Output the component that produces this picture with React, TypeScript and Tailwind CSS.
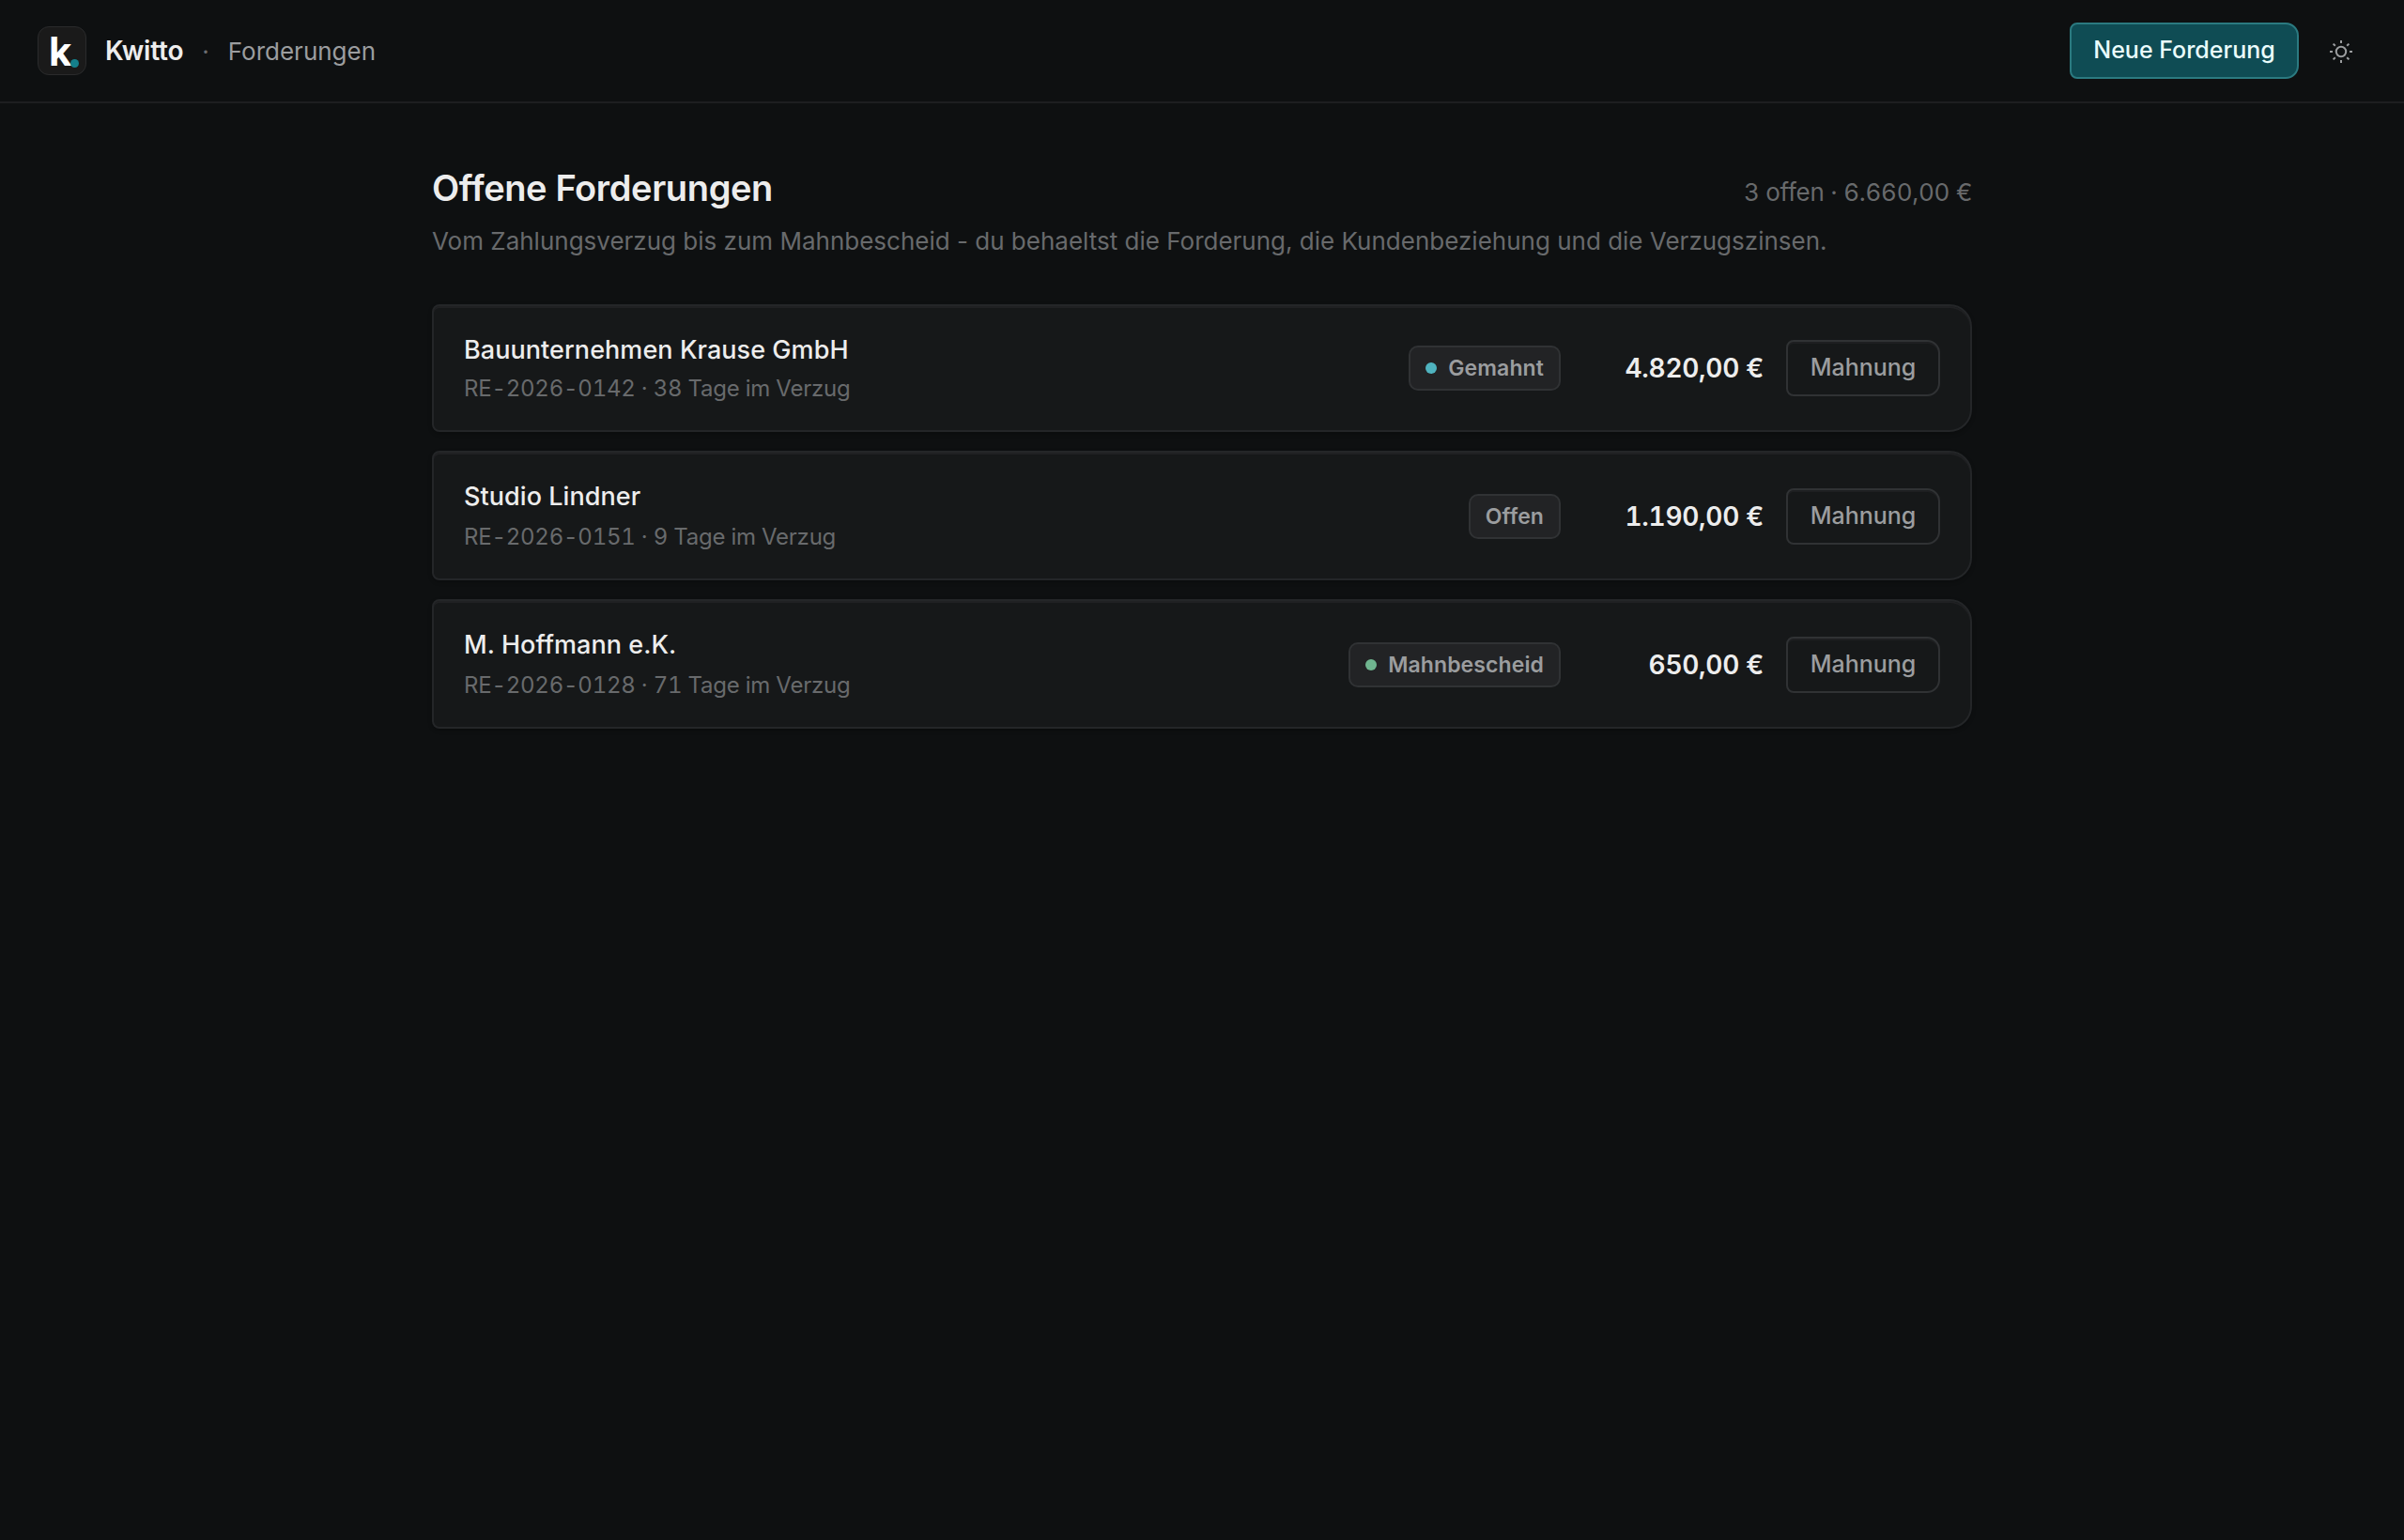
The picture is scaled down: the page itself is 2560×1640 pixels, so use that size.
type Claim = {
  id: string;
  customer: string;
  invoice: string;
  delay: string;
  status: string;
  dot?: string;
  amount: string;
};

const claims: Claim[] = [
  {
    id: '1',
    customer: 'Bauunternehmen Krause GmbH',
    invoice: 'RE-2026-0142',
    delay: '38 Tage im Verzug',
    status: 'Gemahnt',
    dot: 'bg-[#4fb3bf]',
    amount: '4.820,00 €',
  },
  {
    id: '2',
    customer: 'Studio Lindner',
    invoice: 'RE-2026-0151',
    delay: '9 Tage im Verzug',
    status: 'Offen',
    amount: '1.190,00 €',
  },
  {
    id: '3',
    customer: 'M. Hoffmann e.K.',
    invoice: 'RE-2026-0128',
    delay: '71 Tage im Verzug',
    status: 'Mahnbescheid',
    dot: 'bg-[#6fb58f]',
    amount: '650,00 €',
  },
];

const Logo = () => (
  <div className="relative size-[52px] rounded-[12px] border border-[#2a2b2c] bg-[#1a1a1a]">
    <span className="absolute left-[11px] top-[2px] text-[42px] font-bold leading-[48px] text-white">k</span>
    <span className="absolute left-[34px] top-[34px] size-[8.5px] rounded-full bg-[#14808c]" />
  </div>
);

const SunIcon = () => (
  <svg width="26" height="26" viewBox="-13 -13 26 26" fill="none" stroke="currentColor" strokeWidth="2">
    <circle r="5.2" />
    <path d="M0 -12v3M0 12v-3M-12 0h3M12 0h-3M-8.4 -8.4l2.2 2.2M8.4 8.4l-2.2 -2.2M-8.4 8.4l2.2 -2.2M8.4 -8.4l-2.2 2.2" />
  </svg>
);

const Header = () => (
  <header className="flex h-[110px] items-center justify-between border-b-2 border-[#1d1e20] px-10">
    <div className="flex items-center">
      <Logo />
      <span className="ml-5 text-[28px] font-semibold tracking-[-0.2px] text-[#ededed]">Kwitto</span>
      <span className="ml-5 text-[26px] text-[#6b6d70]">·</span>
      <span className="ml-5 text-[26px] text-[#9b9d9f]">Forderungen</span>
    </div>
    <div className="flex items-center">
      <button className="h-[60px] w-[244px] rounded-l-[8px] rounded-r-[14px] border-2 border-[#2b7a80] bg-[#0f4c54] text-[25px] font-medium text-[#eafcfc]">
        Neue Forderung
      </button>
      <button className="ml-8 mr-[14px] mt-[2px] text-[#9b9d9f]">
        <SunIcon />
      </button>
    </div>
  </header>
);

const ClaimRow = ({ claim }: { claim: Claim }) => (
  <li className="group flex h-[138px] items-center rounded-l-[8px] rounded-r-[24px] border-2 border-[#242628] bg-[#161819] px-8 shadow-[inset_0_2px_0_#202123,0_2px_4px_rgba(0,0,0,0.25)] first:h-[136px]">
    <div className="flex flex-1 flex-col gap-[6px] group-first:gap-1">
      <div className="text-[27px] font-medium leading-[39px] tracking-[0.06px] text-[#ededed]">{claim.customer}</div>
      <div className="text-[24px] leading-[35px] tracking-[-0.24px] tabular-nums text-[#686a6c]">
        {claim.invoice} · {claim.delay}
      </div>
    </div>
    <div className="mt-[2px] flex items-center group-first:mt-0">
      <span className="flex h-[48px] items-center gap-3 rounded-[10px] border-2 border-[#303234] bg-[#222325] px-4 text-[23px] font-semibold tracking-[0.1px] text-[#9b9d9f]">
        {claim.dot && <span className={`size-3 rounded-full ${claim.dot}`} />}
        {claim.status}
      </span>
      <span className="ml-6 w-[192px] text-right text-[28px] font-semibold leading-[34px] tracking-[-0.28px] tabular-nums text-[#ededed]">
        {claim.amount}
      </span>
      <button className="ml-6 h-[60px] w-[164px] rounded-l-[8px] rounded-r-[14px] border-2 border-[#303234] text-[25px] font-medium text-[#9b9d9f] shadow-[inset_0_2px_0_#1e1f21]">
        Mahnung
      </button>
    </div>
  </li>
);

export default function App() {
  return (
    <div className="min-h-[1640px] bg-[#0e1011] font-['Inter',sans-serif]">
      <Header />
      <main className="mx-auto w-[1640px] pt-[64px]">
        <div className="flex items-baseline justify-between">
          <h1 className="text-[38px] font-semibold leading-[52px] tracking-[-0.38px] text-[#ededed]">
            Offene Forderungen
          </h1>
          <span className="text-[26px] tracking-[-0.26px] tabular-nums text-[#686a6c]">3 offen · 6.660,00 €</span>
        </div>
        <p className="mt-[11px] text-[26px] leading-[40px] text-[#686a6c]">
          Vom Zahlungsverzug bis zum Mahnbescheid - du behaeltst die Forderung, die Kundenbeziehung und die Verzugszinsen.
        </p>
        <ul className="mt-[47px] flex flex-col gap-5">
          {claims.map((claim) => (
            <ClaimRow key={claim.id} claim={claim} />
          ))}
        </ul>
      </main>
    </div>
  );
}
